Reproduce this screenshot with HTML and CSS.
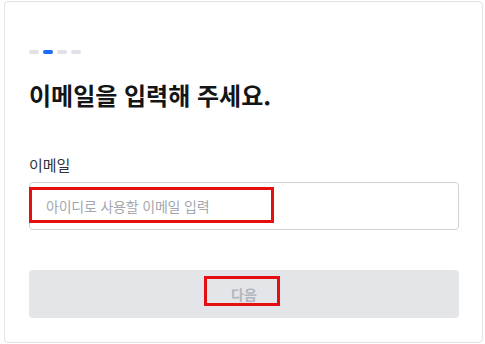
FILE: index.html
```html
<!DOCTYPE html>
<html lang="ko">
<head>
<meta charset="utf-8">
<title>이메일 입력</title>
<link rel="stylesheet" href="styles.css">
</head>
<body>
<main class="card">
  <div class="steps">
    <span class="step"></span>
    <span class="step step-active"></span>
    <span class="step"></span>
    <span class="step"></span>
  </div>
  <h1 class="title">이메일을 입력해 주세요.</h1>
  <label class="label" for="email">이메일</label>
  <div class="field">
    <input id="email" class="input" type="text" placeholder="아이디로 사용할 이메일 입력">
    <span class="mark mark-input"></span>
  </div>
  <div class="action">
    <button class="btn" type="button">다음</button>
    <span class="mark mark-btn"></span>
  </div>
</main>
</body>
</html>
```

FILE: styles.css
```css
html, body {
  margin: 0;
  padding: 0;
  background: #ffffff;
}
body {
  font-family: "Noto Sans CJK KR", "Noto Sans", sans-serif;
  padding: 1px 0 0 4px;
}
.card {
  box-sizing: border-box;
  width: 479px;
  height: 342px;
  border: 1px solid #e2e3e6;
  border-radius: 4px;
  padding: 48px 23px 0 24px;
  display: flex;
  flex-direction: column;
}
.steps {
  display: flex;
  gap: 4px;
  height: 4px;
}
.step {
  width: 10px;
  height: 4px;
  border-radius: 2px;
  background: #dfe1e6;
}
.step-active {
  background: #1b6ef3;
}
.title {
  margin: 26px 0 0;
  font-size: 24px;
  line-height: 30px;
  font-weight: 700;
  color: #141517;
}
.label {
  margin-top: 45px;
  font-size: 15px;
  line-height: 20px;
  color: #2f3135;
}
.field {
  position: relative;
  margin-top: 7px;
}
.input {
  box-sizing: border-box;
  display: block;
  width: 430px;
  height: 48px;
  margin: 0;
  border: 1px solid #cfd1d6;
  border-radius: 4px;
  padding: 0 0 0 16px;
  font-family: inherit;
  font-size: 14px;
  letter-spacing: -0.2px;
  color: #222;
  background: #fff;
  outline: none;
}
.input::placeholder {
  color: #a4a7ae;
}
.action {
  position: relative;
  margin-top: 40px;
}
.btn {
  box-sizing: border-box;
  display: block;
  width: 430px;
  height: 48px;
  margin: 0;
  border: none;
  border-radius: 4px;
  background: #e4e5e9;
  color: #b3b6bc;
  font-family: inherit;
  font-size: 14px;
  font-weight: 700;
}
.mark {
  position: absolute;
  box-sizing: border-box;
  border: 3px solid #e60f0f;
  pointer-events: none;
}
.mark-input {
  left: 0;
  top: 5px;
  width: 245px;
  height: 36px;
}
.mark-btn {
  left: 175px;
  top: 6px;
  width: 76px;
  height: 30px;
}
```
